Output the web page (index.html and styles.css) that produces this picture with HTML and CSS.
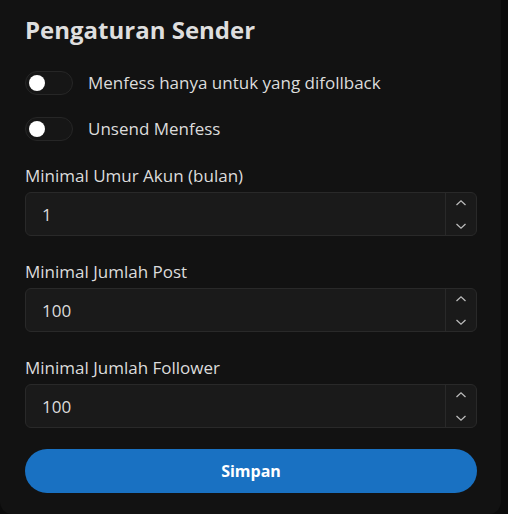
FILE: index.html
```html
<!DOCTYPE html>
<html>
<head>
<meta charset="utf-8">
<link rel="stylesheet" href="styles.css">
</head>
<body>
<div class="card">
  <h1 class="title">Pengaturan Sender</h1>
  <div class="switch-row">
    <span class="switch"><span class="knob"></span></span>
    <span class="switch-label">Menfess hanya untuk yang difollback</span>
  </div>
  <div class="switch-row">
    <span class="switch"><span class="knob"></span></span>
    <span class="switch-label">Unsend Menfess</span>
  </div>
  <div class="field">
    <label class="field-label">Minimal Umur Akun (bulan)</label>
    <div class="num">
      <span class="num-value">1</span>
      <span class="spin">
        <svg width="12" height="8" viewBox="0 0 12 8"><path d="M1.5 6 L6 1.8 L10.5 6" fill="none" stroke="#bbb" stroke-width="1.3"/></svg>
        <svg width="12" height="8" viewBox="0 0 12 8"><path d="M1.5 2 L6 6.2 L10.5 2" fill="none" stroke="#bbb" stroke-width="1.3"/></svg>
      </span>
    </div>
  </div>
  <div class="field">
    <label class="field-label">Minimal Jumlah Post</label>
    <div class="num">
      <span class="num-value">100</span>
      <span class="spin">
        <svg width="12" height="8" viewBox="0 0 12 8"><path d="M1.5 6 L6 1.8 L10.5 6" fill="none" stroke="#bbb" stroke-width="1.3"/></svg>
        <svg width="12" height="8" viewBox="0 0 12 8"><path d="M1.5 2 L6 6.2 L10.5 2" fill="none" stroke="#bbb" stroke-width="1.3"/></svg>
      </span>
    </div>
  </div>
  <div class="field">
    <label class="field-label">Minimal Jumlah Follower</label>
    <div class="num">
      <span class="num-value">100</span>
      <span class="spin">
        <svg width="12" height="8" viewBox="0 0 12 8"><path d="M1.5 6 L6 1.8 L10.5 6" fill="none" stroke="#bbb" stroke-width="1.3"/></svg>
        <svg width="12" height="8" viewBox="0 0 12 8"><path d="M1.5 2 L6 6.2 L10.5 2" fill="none" stroke="#bbb" stroke-width="1.3"/></svg>
      </span>
    </div>
  </div>
  <button class="save">Simpan</button>
</div>
</body>
</html>
```
FILE: styles.css
```css
html, body {
  margin: 0;
  padding: 0;
  background: #0b0b0b;
}
body {
  font-family: "Open Sans", "Lato", sans-serif;
  color: #dcdcdc;
  width: 508px;
  height: 514px;
  overflow: hidden;
}
.card {
  width: 501px;
  height: 514px;
  box-sizing: border-box;
  background: #121212;
  border-radius: 0 0 12px 12px;
  padding: 14px 24px 0 25px;
  display: flex;
  flex-direction: column;
}
.title {
  margin: 0;
  font-size: 24px;
  font-weight: 700;
  line-height: 32px;
  color: #dedede;
}
.switch-row {
  display: flex;
  align-items: center;
  gap: 15px;
  height: 24px;
  margin-top: 25px;
}
.switch-row + .switch-row {
  margin-top: 22px;
}
.switch {
  width: 48px;
  height: 24px;
  box-sizing: border-box;
  border: 1px solid #262626;
  background: #161616;
  border-radius: 12px;
  display: flex;
  align-items: center;
  padding-left: 3px;
}
.knob {
  width: 16px;
  height: 16px;
  border-radius: 50%;
  background: #fff;
}
.switch-label {
  font-size: 17px;
  line-height: 24px;
}
.field {
  margin-top: 23px;
  display: flex;
  flex-direction: column;
}
.field + .field {
  margin-top: 24px;
}
.field-label {
  font-size: 17px;
  line-height: 24px;
  margin-bottom: 4px;
}
.num {
  height: 44px;
  box-sizing: border-box;
  border: 1px solid #292929;
  border-radius: 6px;
  background: #1a1a1a;
  display: flex;
  align-items: stretch;
}
.num-value {
  flex: 1;
  display: flex;
  align-items: center;
  padding-left: 16px;
  font-size: 17px;
}
.spin {
  width: 30px;
  border-left: 1px solid #292929;
  display: flex;
  flex-direction: column;
  align-items: center;
  justify-content: space-between;
  padding: 6px 0 5px;
}
.spin svg {
  display: block;
}
.save {
  margin-top: 21px;
  height: 44px;
  border: none;
  border-radius: 22px;
  background: #1971c2;
  color: #fff;
  font-family: inherit;
  font-size: 16px;
  font-weight: 700;
}
```
